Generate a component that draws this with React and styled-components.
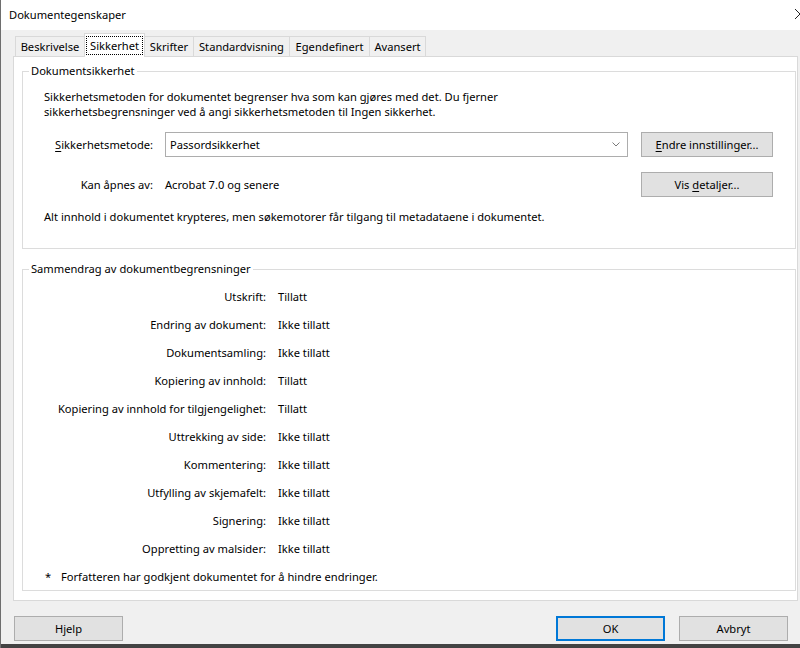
import React from 'react';
import styled, { createGlobalStyle } from 'styled-components';

const Global = createGlobalStyle`
  html, body { margin: 0; padding: 0; background: #f0f0f0; }
  body {
    font-family: "Noto Sans", "Open Sans", sans-serif;
    font-size: 11.15px;
    color: #000;
  }
  * { box-sizing: border-box; }
`;

const Window = styled.div`
  width: 800px;
  height: 648px;
  display: flex;
  flex-direction: column;
  overflow: hidden;
  border-left: 1px solid #6e6e6e;
  background: #f0f0f0;
`;

const TitleBar = styled.div`
  height: 30px;
  flex: none;
  display: flex;
  align-items: center;
  justify-content: space-between;
  padding-left: 8px;
  background: #fff;
`;

const Title = styled.span`
  line-height: 16px;
`;

const CloseGlyph = styled.svg`
  width: 5px;
  height: 10px;
  margin-top: -2px;
  flex: none;
`;

const Body = styled.div`
  flex: 1;
  display: flex;
  flex-direction: column;
  padding: 3px 2px 0 12px;
`;

const TabRow = styled.div`
  display: flex;
  align-items: flex-end;
  height: 23px;
  padding-left: 2px;
  position: relative;
  z-index: 1;
`;

const Tab = styled.div`
  width: ${p => p.$w}px;
  height: ${p => (p.$active ? 24 : 20)}px;
  margin-bottom: ${p => (p.$active ? -1 : 0)}px;
  margin-left: -1px;
  border: 1px solid #d9d9d9;
  border-bottom: none;
  background: ${p => (p.$active ? '#fff' : '#f0f0f0')};
  display: flex;
  align-items: center;
  justify-content: center;
  padding: ${p => (p.$active ? '2px 1px 2px' : '0')};
  white-space: nowrap;
  line-height: 16px;
  &:first-child { margin-left: 0; }
`;

const TabLabel = styled.span`
  display: flex;
  align-items: center;
  justify-content: center;
  width: 100%;
  height: 100%;
  outline: ${p => (p.$focus ? '1px dotted #000' : 'none')};
  outline-offset: -1px;
`;

const Panel = styled.div`
  height: 545px;
  flex: none;
  background: #fff;
  border: 1px solid #d9d9d9;
  padding: 6px 1px 8px 8px;
  display: flex;
  flex-direction: column;
`;

const Group = styled.fieldset`
  margin: ${p => p.$mt || 0}px 0 0 0;
  border: 1px solid #dcdcdc;
  padding: ${p => p.$pad};
  min-width: 0;
`;

const Legend = styled.legend`
  margin-left: 6px;
  padding: 0 2px;
  line-height: 16px;
`;

const Para = styled.p`
  margin: ${p => p.$mt || 0}px 0 0 21px;
  line-height: 15px;
`;

const FormRow = styled.div`
  display: flex;
  align-items: center;
  height: 25px;
  margin: ${p => p.$mt}px 0 0 21px;
`;

const FormLabel = styled.span`
  width: 109px;
  margin-right: 12px;
  text-align: right;
  white-space: nowrap;
`;

const Select = styled.div`
  width: 463px;
  height: 25px;
  border: 1px solid #adadad;
  background: #fff;
  display: flex;
  align-items: center;
  justify-content: space-between;
  padding: 0 7px 0 4px;
`;

const Value = styled.span`
  width: 463px;
  white-space: nowrap;
`;

const Chevron = styled.svg`
  width: 8px;
  height: 5px;
`;

const Button = styled.button`
  width: ${p => p.$w}px;
  height: 25px;
  margin-left: ${p => p.$ml || 0}px;
  padding: 0;
  font: inherit;
  color: #000;
  background: #e1e1e1;
  border: ${p => (p.$default ? '2px solid #0078d7' : '1px solid #adadad')};
  flex: none;
`;

const Key = styled.u`
  text-decoration-thickness: 1px;
  text-underline-offset: 2px;
`;

const SummaryGrid = styled.div`
  display: grid;
  grid-template-columns: 243px auto;
  column-gap: 12px;
  grid-auto-rows: 28px;
  align-items: center;
`;

const SumLabel = styled.span`
  text-align: right;
  white-space: nowrap;
`;

const SumValue = styled.span`
  white-space: nowrap;
`;

const Footnote = styled.div`
  display: flex;
  height: 28px;
  align-items: center;
  padding-left: 22px;
`;

const Star = styled.span`
  width: 16px;
`;

const Footer = styled.div`
  display: flex;
  align-items: flex-start;
  padding: 15px 10px 0 1px;
  flex: 1;
`;

const Spacer = styled.div`
  flex: 1;
`;

const Strip = styled.div`
  height: 4px;
  flex: none;
  background: #434343;
`;

const tabs = [
  ['Beskrivelse', 70],
  ['Sikkerhet', 61],
  ['Skrifter', 50],
  ['Standardvisning', 97],
  ['Egendefinert', 81],
  ['Avansert', 57],
];

const rows = [
  ['Utskrift:', 'Tillatt'],
  ['Endring av dokument:', 'Ikke tillatt'],
  ['Dokumentsamling:', 'Ikke tillatt'],
  ['Kopiering av innhold:', 'Tillatt'],
  ['Kopiering av innhold for tilgjengelighet:', 'Tillatt'],
  ['Uttrekking av side:', 'Ikke tillatt'],
  ['Kommentering:', 'Ikke tillatt'],
  ['Utfylling av skjemafelt:', 'Ikke tillatt'],
  ['Signering:', 'Ikke tillatt'],
  ['Oppretting av malsider:', 'Ikke tillatt'],
];

export default function App() {
  return (
    <>
      <Global />
      <Window>
        <TitleBar>
          <Title>Dokumentegenskaper</Title>
          <CloseGlyph viewBox="0 0 5 10">
            <path d="M0 0 L5 5 L0 10" fill="none" stroke="#222" strokeWidth="1" />
          </CloseGlyph>
        </TitleBar>
        <Body>
          <TabRow>
            {tabs.map(([t, w]) => (
              <Tab key={t} $w={w} $active={t === 'Sikkerhet'}>
                <TabLabel $focus={t === 'Sikkerhet'}>{t}</TabLabel>
              </Tab>
            ))}
          </TabRow>
          <Panel>
            <Group $pad="10px 0 24px 0">
              <Legend>Dokumentsikkerhet</Legend>
              <Para>
                Sikkerhetsmetoden for dokumentet begrenser hva som kan gjøres med det. Du fjerner
                <br />
                sikkerhetsbegrensninger ved å angi sikkerhetsmetoden til Ingen sikkerhet.
              </Para>
              <FormRow $mt={13}>
                <FormLabel>
                  <Key>S</Key>ikkerhetsmetode:
                </FormLabel>
                <Select>
                  <span>Passordsikkerhet</span>
                  <Chevron viewBox="0 0 8 5">
                    <path d="M0.5 0.5 L4 4 L7.5 0.5" fill="none" stroke="#7a7a7a" strokeWidth="1" />
                  </Chevron>
                </Select>
                <Button $w={132} $ml={13}>
                  <Key>E</Key>ndre innstillinger...
                </Button>
              </FormRow>
              <FormRow $mt={15}>
                <FormLabel>Kan åpnes av:</FormLabel>
                <Value>Acrobat 7.0 og senere</Value>
                <Button $w={132} $ml={13}>
                  Vis <Key>d</Key>etaljer...
                </Button>
              </FormRow>
              <Para $mt={12}>
                Alt innhold i dokumentet krypteres, men søkemotorer får tilgang til metadataene i dokumentet.
              </Para>
            </Group>
            <Group $mt={12} $pad="5px 0 0 0">
              <Legend>Sammendrag av dokumentbegrensninger</Legend>
              <SummaryGrid>
                {rows.map(([l, v]) => (
                  <React.Fragment key={l}>
                    <SumLabel>{l}</SumLabel>
                    <SumValue>{v}</SumValue>
                  </React.Fragment>
                ))}
              </SummaryGrid>
              <Footnote>
                <Star>*</Star>
                <span>Forfatteren har godkjent dokumentet for å hindre endringer.</span>
              </Footnote>
            </Group>
          </Panel>
          <Footer>
            <Button $w={109}>Hjelp</Button>
            <Spacer />
            <Button $w={109} $default>
              OK
            </Button>
            <Button $w={109} $ml={14}>
              Avbryt
            </Button>
          </Footer>
        </Body>
        <Strip />
      </Window>
    </>
  );
}
